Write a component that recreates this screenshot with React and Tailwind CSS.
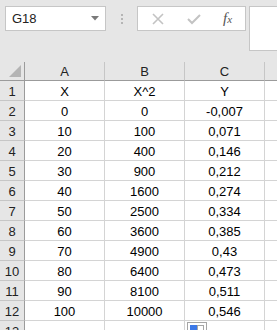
import React from "react";

const rows = [
  ["X", "X^2", "Y"],
  ["0", "0", "-0,007"],
  ["10", "100", "0,071"],
  ["20", "400", "0,146"],
  ["30", "900", "0,212"],
  ["40", "1600", "0,274"],
  ["50", "2500", "0,334"],
  ["60", "3600", "0,385"],
  ["70", "4900", "0,43"],
  ["80", "6400", "0,473"],
  ["90", "8100", "0,511"],
  ["100", "10000", "0,546"],
];

const font = { fontFamily: '"Liberation Sans", Arial, sans-serif' };

export default function App() {
  return (
    <div className="w-[277px] h-[330px] overflow-hidden bg-[#e6e6e6] relative" style={font}>
      {/* top bar */}
      <div className="h-[62px] flex items-start pt-[6px] pl-[5px]">
        <div className="w-[101px] h-[25px] bg-white border border-[#c6c6c6] flex items-center pl-[6px] pr-[6px] justify-between">
          <span className="text-[13px] text-[#222]">G18</span>
          <svg width="8" height="5" viewBox="0 0 8 5"><path d="M0 0 L8 0 L4 4.5 Z" fill="#7a7a7a" /></svg>
        </div>
        <div className="w-[31px] h-[25px] flex flex-col items-center justify-center gap-[2px]">
          <div className="w-[2px] h-[2px] bg-[#b5b5b5]" />
          <div className="w-[2px] h-[2px] bg-[#b5b5b5]" />
          <div className="w-[2px] h-[2px] bg-[#b5b5b5]" />
        </div>
        <div className="w-[109px] h-[25px] bg-white border border-[#c6c6c6] flex items-center">
          <div className="w-[38px] flex justify-center pl-[2px]">
            <svg width="12" height="12" viewBox="0 0 12 12"><path d="M1 1 L11 11 M11 1 L1 11" stroke="#c3c3c3" strokeWidth="1.6" /></svg>
          </div>
          <div className="w-[36px] flex justify-center">
            <svg width="14" height="12" viewBox="0 0 14 12"><path d="M1 6 L5 10 L13 2" stroke="#c3c3c3" strokeWidth="2" fill="none" /></svg>
          </div>
          <div className="flex-1 flex justify-center pr-[2px]">
            <span className="text-[15px] italic text-[#555] leading-none" style={{ fontFamily: '"Liberation Serif", serif' }}>f<span className="text-[11px]">x</span></span>
          </div>
        </div>
        <div className="ml-[3px] flex-1 h-[45px] bg-white border border-[#c6c6c6] border-r-0" />
      </div>

      {/* sheet */}
      <div className="grid grid-cols-[25px_80px_80px_80px_1fr]">
        <div className="h-[19px] bg-[#e6e6e6] border-b border-r border-[#9b9b9b] relative">
          <svg className="absolute right-[3px] bottom-[3px]" width="12" height="12" viewBox="0 0 12 12"><path d="M12 0 L12 12 L0 12 Z" fill="#b4b4b4" /></svg>
        </div>
        {["A", "B", "C"].map((c) => (
          <div key={c} className="h-[19px] bg-[#e6e6e6] border-b border-r border-b-[#9b9b9b] border-r-[#c6c6c6] flex items-center justify-center text-[13px] text-[#222] pt-[1px]">
            {c}
          </div>
        ))}
        <div className="h-[19px] bg-[#e6e6e6] border-b border-[#9b9b9b]" />

        {rows.map((r, i) => (
          <React.Fragment key={i}>
            <div className="h-[20px] bg-[#e6e6e6] border-r border-b border-r-[#9b9b9b] border-b-[#c6c6c6] flex items-center justify-center text-[13px] text-[#222] pt-[2px]">
              {i + 1}
            </div>
            {r.map((v, j) => (
              <div key={j} className="h-[20px] bg-white border-r border-b border-[#d4d4d4] flex items-center justify-center text-[13px] text-black pt-[2px]">
                {v}
              </div>
            ))}
            <div className="h-[20px] bg-white border-b border-[#d4d4d4]" />
          </React.Fragment>
        ))}

        <div className="h-[20px] bg-[#e6e6e6] border-r border-r-[#9b9b9b] flex items-center justify-center text-[13px] text-[#222] pt-[2px]">13</div>
        <div className="h-[20px] bg-white border-r border-[#d4d4d4]" />
        <div className="h-[20px] bg-white border-r border-[#d4d4d4]" />
        <div className="h-[20px] bg-white border-r border-[#d4d4d4]" />
        <div className="h-[20px] bg-white" />
      </div>

      {/* quick analysis icon */}
      <div className="absolute left-[187px] top-[322px] w-[20px] h-[14px] bg-white border border-[#a6a6a6] p-[2px] flex">
        <div className="w-[7px] h-[9px] bg-[#3b78e7]" />
        <div className="w-[7px] h-[9px] bg-white border border-[#a6a6a6]" />
      </div>
    </div>
  );
}
